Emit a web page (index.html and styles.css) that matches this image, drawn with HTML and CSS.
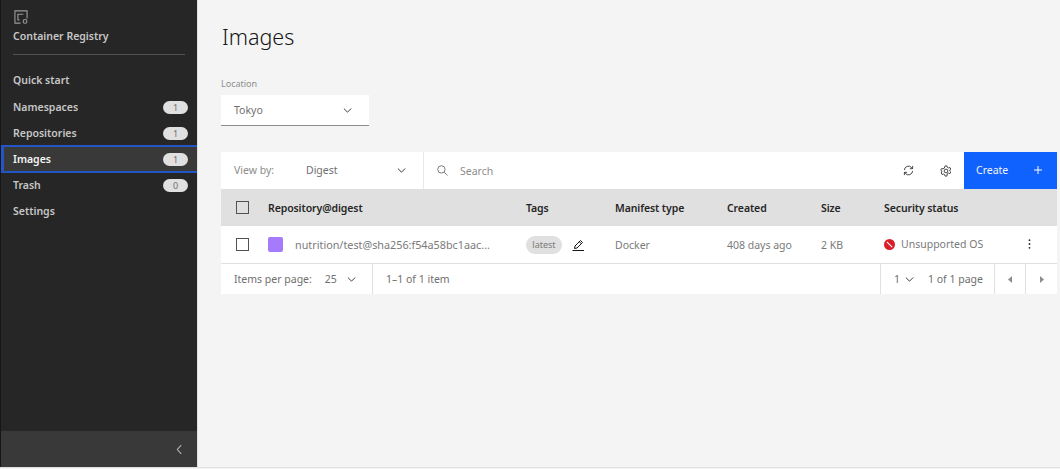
FILE: index.html
```html
<!DOCTYPE html>
<html lang="en">
<head>
  <meta charset="UTF-8" />
  <title>Images - Container Registry</title>
  <link rel="stylesheet" href="styles.css">
</head>
<body>
  <div class="app">
    <aside class="sidebar">
      <div class="brand">
        <svg class="brand-icon" width="14" height="14" viewBox="0 0 15 15" fill="none" stroke="#9a9a9a" stroke-width="1.2">
          <path d="M7 14H1V1h13v8"/>
          <path d="M10 4.500H4.200v6.200H6"/>
          <circle cx="11.800" cy="12.200" r="2"/>
        </svg>
        <div class="brand-name">Container Registry</div>
      </div>
      <nav class="side-nav">
        <a class="side-link">Quick start</a>
        <a class="side-link">Namespaces <span class="count">1</span></a>
        <a class="side-link">Repositories <span class="count">1</span></a>
        <a class="side-link active">Images <span class="count">1</span></a>
        <a class="side-link">Trash <span class="count">0</span></a>
        <a class="side-link">Settings</a>
      </nav>
      <div class="collapse">
        <svg width="7" height="11" viewBox="0 0 8 12" fill="none" stroke="#b5b5b5" stroke-width="1.2"><path d="M6 1L1.500 6 6 11"/></svg>
      </div>
    </aside>

    <main class="content">
      <h1>Images</h1>
      <label class="field-label">Location</label>
      <div class="location">
        <span>Tokyo</span>
        <svg class="chev" width="9" height="5" viewBox="0 0 10 6" fill="none" stroke="#161616" stroke-width="1"><path d="M.6.6L5 5l4.400-4.400"/></svg>
      </div>

      <section class="panel">
        <div class="toolbar">
          <div class="view-by">
            <span class="view-label">View by:</span>
            <span class="view-value">Digest</span>
            <svg class="chev" width="9" height="5" viewBox="0 0 10 6" fill="none" stroke="#161616" stroke-width="1"><path d="M.6.6L5 5l4.400-4.400"/></svg>
          </div>
          <div class="search">
            <svg width="11" height="11" viewBox="0 0 12 12" fill="none" stroke="#6f6f6f" stroke-width="1"><circle cx="4.800" cy="4.800" r="4"/><path d="M7.800 7.800l3.700 3.700"/></svg>
            <span>Search</span>
          </div>
          <button class="tool-btn">
            <svg width="11" height="11" viewBox="0 0 12 12" fill="none" stroke="#393939" stroke-width="1"><path d="M1.500 5.500A4.500 4.500 0 0 1 9.400 2.800L10.500 4"/><path d="M10.500 1v3H7.500"/><path d="M10.500 6.500A4.500 4.500 0 0 1 2.600 9.200L1.500 8"/><path d="M1.500 11V8h3"/></svg>
          </button>
          <button class="tool-btn">
            <svg width="12" height="12" viewBox="0 0 13 13" fill="none" stroke="#393939" stroke-width="1"><circle cx="6.500" cy="6.500" r="2"/><path d="M5.500 1h2l.4 1.500 1.300.7 1.500-.5 1 1.700-1.100 1.100v1l1.100 1.100-1 1.700-1.500-.5-1.300.7L7.500 12h-2l-.4-1.500-1.300-.7-1.500.5-1-1.700L1.900 7.500v-1L.8 5.400l1-1.700 1.500.5 1.300-.7z"/></svg>
          </button>
          <button class="create">
            <span>Create</span>
            <svg width="8" height="8" viewBox="0 0 8 8" stroke="#fff" stroke-width="1"><path d="M4 0v8M0 4h8"/></svg>
          </button>
        </div>

        <div class="row head">
          <span class="check"></span>
          <span>Repository@digest</span>
          <span>Tags</span>
          <span>Manifest type</span>
          <span>Created</span>
          <span>Size</span>
          <span>Security status</span>
        </div>

        <div class="row body-row">
          <span class="check"></span>
          <span class="repo"><i class="swatch"></i>nutrition/test@sha256:f54a58bc1aac...</span>
          <span class="tags">
            <span class="tag">latest</span>
            <svg width="13" height="12" viewBox="0 0 13 12" fill="none" stroke="#161616" stroke-width="1"><path d="M.5 11.500h11.500"/><path d="M2.500 9.500l.5-2.500L8.500 1.500l2 2L5 9z"/><path d="M7.300 2.700l2 2"/></svg>
          </span>
          <span>Docker</span>
          <span>408 days ago</span>
          <span>2 KB</span>
          <span class="status">
            <svg width="11" height="11" viewBox="0 0 11 11"><circle cx="5.500" cy="5.500" r="5.500" fill="#da1e28"/><path d="M2.800 2.800l5.400 5.400" stroke="#fff" stroke-width="1.100"/></svg>
            Unsupported OS
            <svg class="overflow" width="3" height="10" viewBox="0 0 3 10" fill="#262626"><circle cx="1.500" cy="1.200" r=".9"/><circle cx="1.500" cy="5" r=".9"/><circle cx="1.500" cy="8.800" r=".9"/></svg>
          </span>
        </div>

        <div class="pager">
          <div class="pager-size">
            <span>Items per page:</span>
            <span class="size-val">25</span>
            <svg width="9" height="5" viewBox="0 0 10 6" fill="none" stroke="#161616" stroke-width="1"><path d="M.6.6L5 5l4.400-4.400"/></svg>
          </div>
          <div class="pager-range">1–1 of 1 item</div>
          <div class="pager-page">
            <span class="page-val">1</span>
            <svg width="9" height="5" viewBox="0 0 10 6" fill="none" stroke="#161616" stroke-width="1"><path d="M.6.6L5 5l4.400-4.400"/></svg>
            <span class="page-of">1 of 1 page</span>
          </div>
          <div class="pager-arrow"><svg width="4" height="7" viewBox="0 0 4 7" fill="#8d8d8d"><path d="M4 0v7L0 3.500z"/></svg></div>
          <div class="pager-arrow"><svg width="4" height="7" viewBox="0 0 4 7" fill="#8d8d8d"><path d="M0 0v7l4-3.500z"/></svg></div>
        </div>
      </section>
    </main>
  </div>
</body>
</html>
```

FILE: styles.css
```css
* { box-sizing: border-box; }
html, body { margin: 0; height: 100%; }
body {
  font-family: "Noto Sans", "Open Sans", Arial, sans-serif;
  font-size: 10.5px;
  color: #6f6f6f;
  background: #f4f4f4;
  overflow: hidden;
}
.app { display: flex; height: 468px; border-bottom: 1px solid #e0e0e0; }

/* sidebar */
.sidebar {
  width: 198px;
  flex: none;
  display: flex;
  flex-direction: column;
  background: #262626;
  border-left: 1px solid #161616;
  border-right: 1px solid #e0e0e0;
  color: #c6c6c6;
}
.brand { margin: 0 12px; padding: 10px 0 12px 1px; border-bottom: 1px solid #525252; height: 55px; }
.brand-icon { display: block; }
.brand-name { margin-top: 4px; font-size: 10.5px; font-weight: 600; line-height: 16px; margin-left: -1px; }
.side-nav { flex: 1; padding-top: 13px; }
.side-link {
  display: flex;
  align-items: center;
  justify-content: space-between;
  height: 26px;
  padding: 0 9px 0 12px;
  font-size: 10.5px;
  font-weight: 600;
}
.side-link:first-child { padding-bottom: 2px; }
.side-link.active {
  height: 28px;
  margin: -1px 0;
  padding-left: 9px;
  background: #393939;
  border: 2px solid #2355c4;
  border-width: 2px 0 2px 3px;
  color: #f4f4f4;
}
.count {
  width: 25px;
  height: 13px;
  border-radius: 7px;
  background: #e0e0e0;
  color: #6f6f6f;
  font-size: 9px;
  font-weight: 400;
  line-height: 13px;
  text-align: center;
}
.collapse {
  display: flex;
  align-items: center;
  justify-content: flex-end;
  height: 36px;
  padding-right: 14px;
  background: #393939;
}

/* main */
.content { flex: 1; padding: 0 3px 0 23px; min-width: 0; }
h1 { margin: 22px 0 0 1px; font-size: 21.500px; font-weight: 300; line-height: 30px; color: #161616; }
.field-label { display: block; margin-top: 26px; font-size: 9px; line-height: 12px; color: #8d8d8d; }
.location {
  display: flex;
  align-items: center;
  justify-content: space-between;
  width: 148px;
  height: 31px;
  margin-top: 5px;
  padding: 0 17px 0 13px;
  background: #fff;
  border-bottom: 1px solid #8d8d8d;
}
.panel { margin-top: 26px; }
.toolbar { display: flex; align-items: center; height: 37px; background: #fff; }
.view-by {
  display: flex;
  align-items: center;
  width: 203px;
  height: 100%;
  padding: 0 17px 1px 13px;
  border-right: 1px solid #e8e8e8;
}
.view-label { width: 72px; color: #8d8d8d; }
.view-value { flex: 1; }
.search { flex: 1; display: flex; align-items: center; gap: 12px; padding-left: 13px; color: #8d8d8d; }
.tool-btn {
  display: flex;
  align-items: center;
  justify-content: center;
  width: 37px;
  height: 37px;
  padding: 0;
  background: none;
  border: none;
}
.create {
  display: flex;
  align-items: center;
  justify-content: space-between;
  width: 93px;
  height: 37px;
  padding: 0 15px 1px 12px;
  background: #0f62fe;
  border: none;
  color: #f4f4f4;
  font: inherit;
}

/* table */
.row {
  display: grid;
  grid-template-columns: 47px 258px 89px 112px 94px 63px 173px;
  align-items: center;
  height: 37px;
}
.head { background: #e0e0e0; color: #262626; font-weight: 600; letter-spacing: -0.1px; }
.body-row { height: 38px; background: #fff; border-bottom: 1px solid #e0e0e0; color: #7a7a7a; }
.check {
  width: 13px;
  height: 13px;
  margin-left: 15px;
  border: 1px solid #525252;
}
.repo { display: flex; align-items: center; gap: 12px; white-space: nowrap; font-size: 10.800px; }
.swatch { width: 15px; height: 15px; border-radius: 2px; background: #a67bfb; }
.tags { display: flex; align-items: center; gap: 10px; }
.tag {
  width: 36px;
  height: 18px;
  border-radius: 9px;
  background: #e0e0e0;
  font-size: 9px;
  line-height: 18px;
  text-align: center;
}
.status { display: flex; align-items: center; gap: 6px; white-space: nowrap; padding-bottom: 1px; }
.overflow { margin-left: auto; margin-right: 26px; }

/* pagination */
.pager { display: flex; align-items: center; height: 30px; background: #fff; }
.pager > div { display: flex; align-items: center; height: 100%; }
.pager-size { width: 152px; padding-left: 13px; border-right: 1px solid #e0e0e0; }
.size-val { margin-left: 13px; margin-right: 10px; }
.pager-range { flex: 1; padding-left: 13px; }
.pager-page { width: 115px; padding-left: 13px; border-left: 1px solid #e0e0e0; border-right: 1px solid #e0e0e0; }
.page-val { margin-right: 5px; }
.page-of { margin-left: 14px; }
.pager-arrow { justify-content: center; width: 31px; border-right: 1px solid #e0e0e0; }
.pager-arrow:last-child { border-right: none; }
```
